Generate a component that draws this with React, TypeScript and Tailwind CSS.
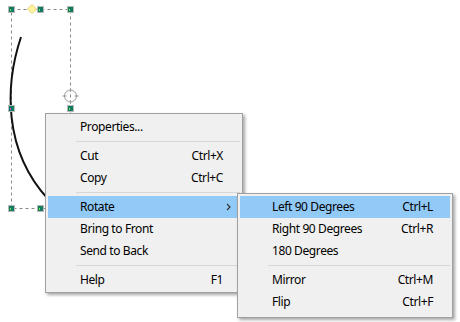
import React from "react";

type Item =
  | { kind: "item"; label: string; shortcut?: string; active?: boolean; submenu?: boolean }
  | { kind: "sep" };

const mainItems: Item[] = [
  { kind: "item", label: "Properties..." },
  { kind: "sep" },
  { kind: "item", label: "Cut", shortcut: "Ctrl+X" },
  { kind: "item", label: "Copy", shortcut: "Ctrl+C" },
  { kind: "sep" },
  { kind: "item", label: "Rotate", active: true, submenu: true },
  { kind: "item", label: "Bring to Front" },
  { kind: "item", label: "Send to Back" },
  { kind: "sep" },
  { kind: "item", label: "Help", shortcut: "F1" },
];

const rotateItems: Item[] = [
  { kind: "item", label: "Left 90 Degrees", shortcut: "Ctrl+L", active: true },
  { kind: "item", label: "Right 90 Degrees", shortcut: "Ctrl+R" },
  { kind: "item", label: "180 Degrees" },
  { kind: "sep" },
  { kind: "item", label: "Mirror", shortcut: "Ctrl+M" },
  { kind: "item", label: "Flip", shortcut: "Ctrl+F" },
];

function MenuRows({ items }: { items: Item[] }) {
  return (
    <>
      {items.map((it, i) =>
        it.kind === "sep" ? (
          <div key={i} className="h-[7px] flex items-center pl-[28px]">
            <div className="h-px w-full bg-[#d7d7d7]" />
          </div>
        ) : (
          <div
            key={i}
            className={`h-[22px] flex items-center justify-between pl-[32px] ${
              it.submenu ? "pr-[9px]" : "pr-[17px]"
            } ${it.active ? "bg-[#91c9f7]" : ""}`}
          >
            <span>{it.label}</span>
            {it.shortcut && <span>{it.shortcut}</span>}
            {it.submenu && (
              <svg width="5" height="8" viewBox="0 0 5 8">
                <path d="M1 1 L4 4 L1 7" fill="none" stroke="#333" strokeWidth="1.2" />
              </svg>
            )}
          </div>
        )
      )}
    </>
  );
}

function Handle({ x, y, mark = "#6ee85a" }: { x: number; y: number; mark?: string }) {
  return (
    <g>
      <rect x={x - 3.5} y={y - 3.5} width="7" height="7" fill="#b9b9b9" />
      <rect x={x - 2.5} y={y - 2.5} width="5" height="5" fill="#127a5e" />
      <rect x={x - 1.5} y={y - 0.5} width="1" height="2" fill={mark} />
    </g>
  );
}

export default function App() {
  return (
    <div
      className="relative w-[460px] h-[322px] bg-white overflow-hidden text-[12px] tracking-[-0.4px] text-black"
      style={{ fontFamily: '"Segoe UI", "Noto Sans", sans-serif' }}
    >
      <svg className="absolute inset-0" width="460" height="322">
        <rect
          x="11.5"
          y="9.5"
          width="59"
          height="199"
          fill="none"
          stroke="#8a8a8a"
          strokeDasharray="3 3"
        />
        <path d="M21 37 C 5 85, 3 150, 48 199" fill="none" stroke="#111" strokeWidth="2" />
        <Handle x={11.5} y={9.5} />
        <Handle x={40.5} y={9.5} />
        <Handle x={70.5} y={9.5} />
        <Handle x={11.5} y={108.5} mark="#c040e0" />
        <Handle x={70.5} y={108.5} />
        <Handle x={11.5} y={208.5} />
        <Handle x={40.5} y={208.5} />
        <path d="M32 4.5 L36.5 9 L32 13.5 L27.5 9 Z" fill="#fff4a0" stroke="#e6d46e" />
        <g stroke="#9a9a9a" fill="none">
          <circle cx="70.5" cy="96" r="6" />
          <path d="M70.5 88 V92 M70.5 100 V104 M62.5 96 H66.5 M74.5 96 H78.5" />
        </g>
      </svg>

      <div className="absolute left-[45px] top-[113px] w-[198px] h-[180px] bg-[#f0f0f0] border border-[#a0a0a0] p-[2px] shadow-[2px_2px_3px_rgba(0,0,0,0.35)]">
        <MenuRows items={mainItems} />
      </div>

      <div className="absolute left-[237px] top-[193px] w-[216px] h-[125px] bg-[#f0f0f0] border border-[#a0a0a0] p-[2px] shadow-[2px_2px_3px_rgba(0,0,0,0.35)]">
        <MenuRows items={rotateItems} />
      </div>
    </div>
  );
}
